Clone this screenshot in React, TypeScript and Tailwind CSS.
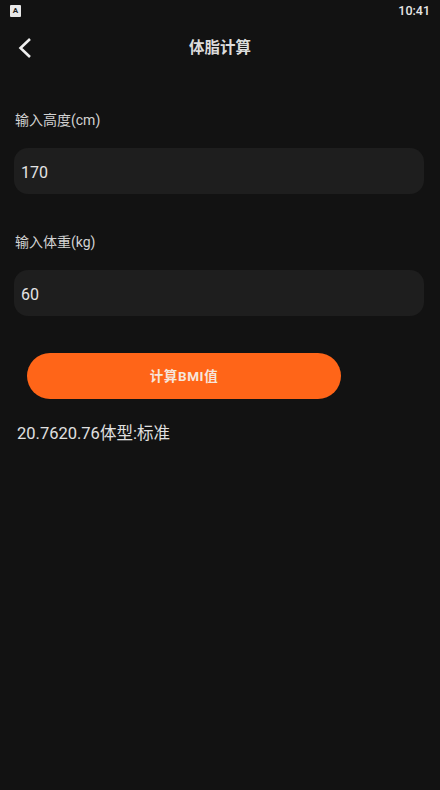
const font = { fontFamily: '"Roboto", "Noto Sans CJK SC", sans-serif' };

const Field = ({ label, value }: { label: string; value: string }) => (
  <div className="flex flex-col">
    <label className="h-[22px] pl-[15px] text-[14px] leading-[22px] text-[#d2d2d2]">{label}</label>
    <div className="ml-[14px] mr-[16px] mt-[17px] flex h-[46px] items-center rounded-[14px] bg-[#1e1e1e] px-[7px] pt-[3px] text-[16px] text-[#e4e4e4]">
      {value}
    </div>
  </div>
);

const App = () => {
  return (
    <div className="flex h-[790px] w-[440px] flex-col overflow-hidden bg-[#121212]" style={font}>
      {/* status bar */}
      <div className="flex h-[22px] items-center justify-between pl-[10px] pr-[10px]">
        <div className="flex h-[12px] w-[11px] items-center justify-center rounded-[1px] bg-[#e8e8e8]">
          <span className="text-[8px] font-bold leading-none text-[#222]">A</span>
        </div>
        <span className="text-[12.5px] font-medium text-[#e6e6e6]">10:41</span>
      </div>

      <nav className="relative flex h-[50px] items-center justify-center pt-[3px]">
        <svg className="absolute left-[17px] top-[15px]" width="16" height="22" viewBox="0 0 16 22" fill="none">
          <path d="M13 2 L3.5 11 L13 20" stroke="#eeeeee" strokeWidth="2.6" />
        </svg>
        <h1 className="text-[15.5px] font-bold text-[#dcdcdc]">体脂计算</h1>
      </nav>

      <div className="mt-[37px] flex flex-col gap-[37px]">
        <Field label="输入高度(cm)" value="170" />
        <Field label="输入体重(kg)" value="60" />
      </div>

      <button
        type="button"
        className="ml-[27px] mt-[37px] h-[46px] w-[314px] rounded-full bg-[#ff6518] text-[13.5px] font-bold tracking-[0.6px] text-[#f6e6dc]"
      >
        计算BMI值
      </button>

      <p className="ml-[17px] mt-[23px] text-[16.5px] leading-[24px] text-[#e0e0e0]">20.7620.76体型:标准</p>
    </div>
  );
};

export default App;
